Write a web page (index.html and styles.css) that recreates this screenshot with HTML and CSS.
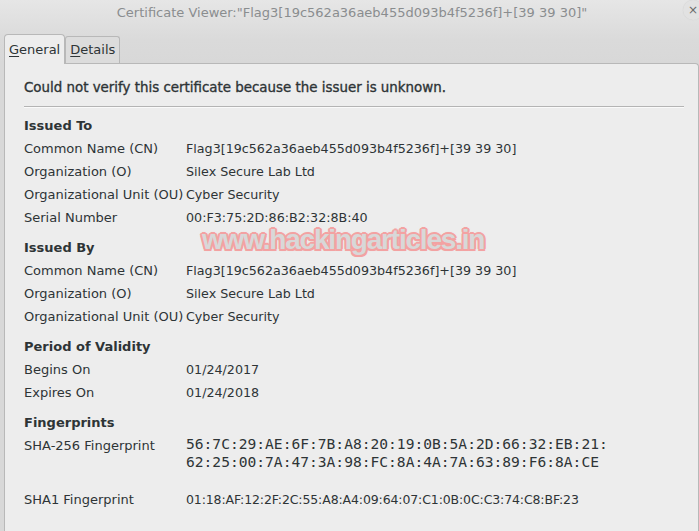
FILE: index.html
```html
<!DOCTYPE html>
<html>
<head>
<meta charset="utf-8">
<link rel="stylesheet" href="styles.css">
</head>
<body>
<div class="window">
  <header class="titlebar">
    <span class="title">Certificate Viewer:"Flag3[19c562a36aeb455d093b4f5236f]+[39 39 30]"</span>
    <span class="close">&#215;</span>
  </header>
  <div class="notebook">
    <div class="tabs">
      <div class="tab active"><u>G</u>eneral</div>
      <div class="tab"><u>D</u>etails</div>
    </div>
    <div class="panel">
      <div class="notice">Could not verify this certificate because the issuer is unknown.</div>
      <div class="sep"></div>

      <div class="section">
        <div class="stitle">Issued To</div>
        <div class="label">Common Name (CN)</div><div class="value">Flag3[19c562a36aeb455d093b4f5236f]+[39 39 30]</div>
        <div class="label">Organization (O)</div><div class="value">Silex Secure Lab Ltd</div>
        <div class="label">Organizational Unit (OU)</div><div class="value">Cyber Security</div>
        <div class="label">Serial Number</div><div class="value">00:F3:75:2D:86:B2:32:8B:40</div>
      </div>

      <div class="section">
        <div class="stitle">Issued By</div>
        <div class="label">Common Name (CN)</div><div class="value">Flag3[19c562a36aeb455d093b4f5236f]+[39 39 30]</div>
        <div class="label">Organization (O)</div><div class="value">Silex Secure Lab Ltd</div>
        <div class="label">Organizational Unit (OU)</div><div class="value">Cyber Security</div>
      </div>

      <div class="section">
        <div class="stitle">Period of Validity</div>
        <div class="label">Begins On</div><div class="value">01/24/2017</div>
        <div class="label">Expires On</div><div class="value">01/24/2018</div>
      </div>

      <div class="section fp">
        <div class="stitle">Fingerprints</div>
        <div class="label">SHA-256 Fingerprint</div><div class="value mono">56:7C:29:AE:6F:7B:A8:20:19:0B:5A:2D:66:32:EB:21:<br>62:25:00:7A:47:3A:98:FC:8A:4A:7A:63:89:F6:8A:CE</div>
        <div class="label sha1">SHA1 Fingerprint</div><div class="value sha1 sha1v">01:18:AF:12:2F:2C:55:A8:A4:09:64:07:C1:0B:0C:C3:74:C8:BF:23</div>
      </div>

      <div class="watermark">www.hackingarticles.in</div>
    </div>
  </div>
</div>
</body>
</html>
```

FILE: styles.css
```css
html, body {
  margin: 0;
  padding: 0;
}
body {
  width: 699px;
  height: 531px;
  overflow: hidden;
  font-family: "DejaVu Sans", sans-serif;
  font-size: 13px;
  color: #2e3436;
  background: linear-gradient(#e6e6e6 0px, #dadada 40px, #d8d8d8 63px);
}
.window {
  display: flex;
  flex-direction: column;
  height: 531px;
}
.titlebar {
  position: relative;
  height: 30px;
  display: flex;
  align-items: center;
  justify-content: center;
  flex: none;
}
.title {
  color: #8a8d8f;
  font-size: 13px;
  padding-left: 5px;
  padding-bottom: 6px;
}
.close {
  position: absolute;
  right: -4px;
  top: 0px;
  width: 20px;
  height: 20px;
  border-radius: 50%;
  background: #e2e2e2;
  box-shadow: 0 0 1px #c8c8c8;
  color: #6a6a6a;
  font-size: 12px;
  line-height: 20px;
  text-align: center;
}
.notebook {
  flex: 1;
  display: flex;
  flex-direction: column;
  padding: 5px 0 0 4px;
}
.tabs {
  display: flex;
  align-items: flex-end;
  height: 28px;
  flex: none;
  position: relative;
  z-index: 1;
}
.tab {
  font-size: 13px;
  line-height: 26px;
  padding: 0 4px;
  border: 1px solid #b8b8b8;
  border-bottom: none;
  border-radius: 3px 3px 0 0;
  background: #dcdcdc;
  height: 26px;
  color: #2e3436;
}
.tab.active {
  background: #ededed;
  height: 29px;
  line-height: 30px;
  margin-bottom: -1px;
  border-radius: 4px 4px 0 0;
}
.tab u {
  text-decoration-thickness: 1px;
  text-underline-offset: 2px;
}
.panel {
  position: relative;
  flex: 1;
  background: #ededed;
  border: 1px solid #b8b8b8;
  border-bottom: none;
  border-radius: 0 4px 0 0;
  padding: 12px 14px 0 19px;
}
.notice {
  line-height: 24px;
  font-size: 13.4px;
  -webkit-text-stroke: 0.35px #2e3436;
}
.sep {
  height: 1px;
  background: #b4b4b4;
  border-bottom: 1px solid #fafafa;
  margin: 6px 0 6px 0;
}
.section {
  display: grid;
  grid-template-columns: 162px 1fr;
  line-height: 23px;
  margin-bottom: 7px;
}
.stitle {
  grid-column: 1 / 3;
  font-weight: bold;
}
.value {
  font-size: 12.7px;
}
.mono {
  font-family: "DejaVu Sans Mono", monospace;
  font-size: 14.6px;
  line-height: 18px;
  padding-top: 1px;
  color: #2e3436;
}
.sha1 {
  margin-top: 17px;
}
.sha1v {
  font-size: 12.5px;
  letter-spacing: -0.12px;
}
.watermark {
  position: absolute;
  left: 197px;
  top: 160px;
  font-family: "Liberation Sans", Arial, sans-serif;
  font-weight: bold;
  font-size: 28px;
  letter-spacing: -1.2px;
  color: #d8d8d8;
  text-shadow:
    2px 0 0 #f3a2a2, -2px 0 0 #f3a2a2, 0 2px 0 #f3a2a2, 0 -2px 0 #f3a2a2,
    1.5px 1.5px 0 #f3a2a2, -1.5px 1.5px 0 #f3a2a2, 1.5px -1.5px 0 #f3a2a2, -1.5px -1.5px 0 #f3a2a2,
    0 0 3px #f3a2a2;
}
```
